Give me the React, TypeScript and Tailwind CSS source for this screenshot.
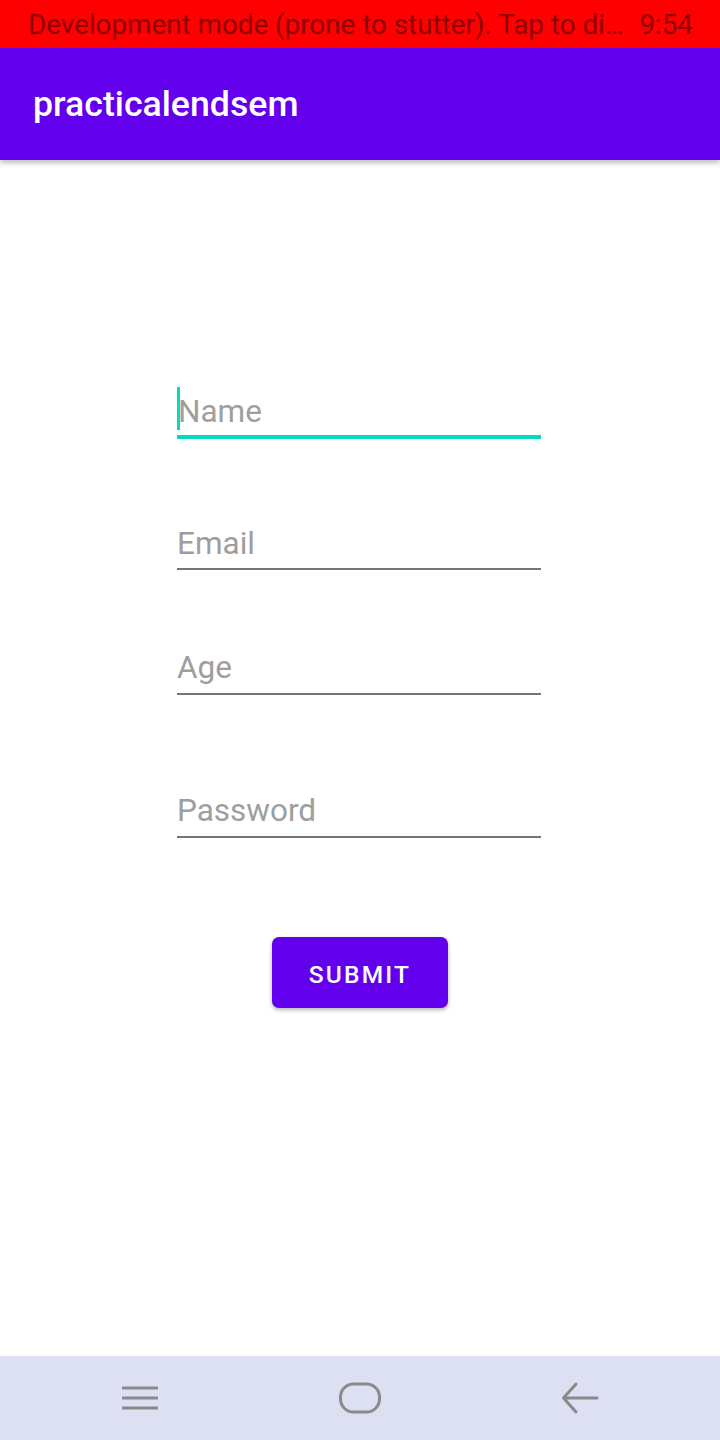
import React from 'react';

const fields = [
  { label: 'Name', focused: true, mt: 'mt-[233px]', pb: 'pb-[5px]' },
  { label: 'Email', focused: false, mt: 'mt-[87px]', pb: 'pb-[6px]' },
  { label: 'Age', focused: false, mt: 'mt-[80px]', pb: 'pb-[7px]' },
  { label: 'Password', focused: false, mt: 'mt-[98px]', pb: 'pb-[7px]' },
];

const Field = ({ label, focused, mt, pb }: { label: string; focused: boolean; mt: string; pb: string }) => (
  <div
    className={`${mt} ${pb} w-[364px] flex items-center ${
      focused ? 'border-b-4 border-[#03dac5]' : 'border-b-2 border-[#757575]'
    }`}
  >
    {focused && <span className="w-[3px] h-[43px] bg-[#03dac5] -mt-[6px] mr-[-2px]" />}
    <span className="text-[31.5px] leading-[36px] text-[#9e9e9e]">{label}</span>
  </div>
);

export default function App() {
  return (
    <div className="w-[720px] h-[1440px] flex flex-col bg-white font-['Roboto',sans-serif]">
      <div className="h-[48px] bg-[#ff0000] flex items-center justify-between pl-[28px] pr-[27px] pt-[2px] text-[27.8px] leading-none text-[#8f0000]">
        <span>Development mode (prone to stutter). Tap to di…</span>
        <span>9:54</span>
      </div>
      <div className="relative z-10 h-[112px] bg-[#6200ee] flex items-center pl-[33px] pt-[2px] shadow-[0_3px_5px_rgba(0,0,0,0.25)]">
        <h1 className="text-white text-[35.7px] font-medium leading-none">practicalendsem</h1>
      </div>

      <div className="flex-1 flex flex-col items-start pl-[177px]">
        {fields.map((f) => (
          <Field key={f.label} {...f} />
        ))}
        <button className="mt-[99px] ml-[95px] w-[176px] h-[71px] pt-[5px] rounded-[7px] bg-[#6200ee] text-white text-[24.5px] font-medium tracking-[2.2px] shadow-[0_2px_4px_rgba(0,0,0,0.3)]">
          SUBMIT
        </button>
      </div>

      <div className="h-[84px] bg-[#dddff2] flex items-center justify-center gap-[160px]">
        <svg width="60" height="60" viewBox="0 0 60 60" fill="none" stroke="#8a8a8a" strokeWidth="3">
          <path d="M12 20H48M12 30H48M12 40H48" />
        </svg>
        <svg width="60" height="60" viewBox="0 0 60 60" fill="none" stroke="#8a8a8a" strokeWidth="3">
          <rect x="10.5" y="16" width="39" height="28" rx="13" />
        </svg>
        <svg width="60" height="60" viewBox="0 0 60 60" fill="none" stroke="#8a8a8a" strokeWidth="3" strokeLinecap="round" strokeLinejoin="round">
          <path d="M13.5 30H47M26 16L13.5 30L26 44" />
        </svg>
      </div>
    </div>
  );
}
